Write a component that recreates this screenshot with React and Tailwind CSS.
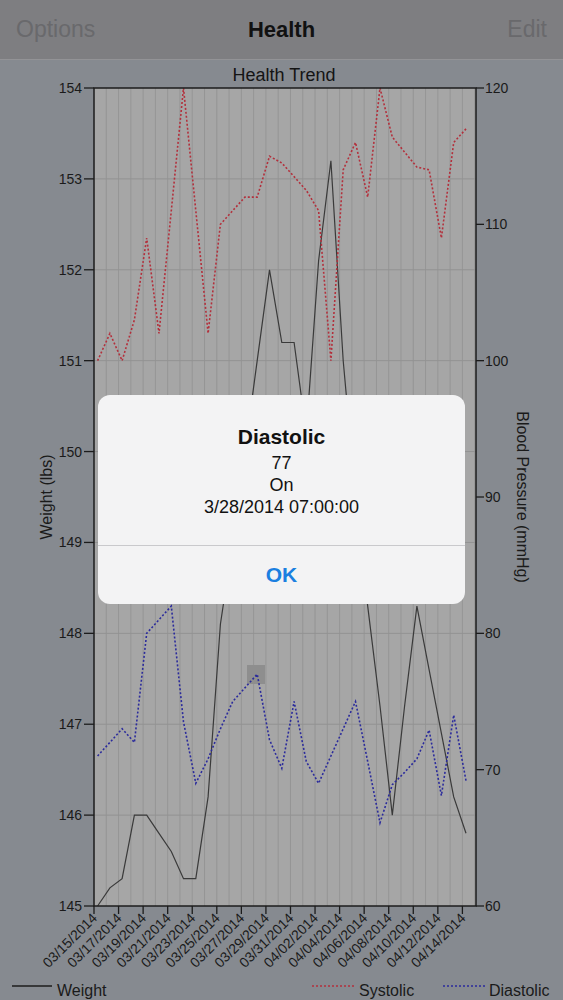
import React from "react";

const font = '"Liberation Sans", Arial, sans-serif';

const weight = [
  145.0, 145.2, 145.3, 146.0, 146.0, 145.8, 145.6, 145.3, 145.3, 146.2, 148.1,
  149.0, 150.0, 151.0, 152.0, 151.2, 151.2, 150.2, 152.1, 153.2, 151.0, 149.5,
  148.3, 147.2, 146.0, 147.2, 148.3, 147.6, 146.9, 146.2, 145.8,
];
const systolic = [
  100, 102, 100, 103, 109, 102, 111, 120, 111, 102, 110, 111, 112, 112, 115, 114.5,
  113.5, 112.5, 111, 100, 114, 116, 112, 120, 116.4, 115.3, 114.2, 114, 109, 116, 117,
];
const diastolic = [
  71, 72, 73, 72, 80, 81, 82, 73.5, 69, 70.8, 73, 75, 76, 77, 72.2, 70.1, 75, 70.6, 69,
  71, 73, 75, 70.6, 66.1, 68.9, 69.8, 70.8, 72.9, 68.1, 74, 69.2,
];
const dates = [
  "03/15/2014", "03/17/2014", "03/19/2014", "03/21/2014", "03/23/2014", "03/25/2014",
  "03/27/2014", "03/29/2014", "03/31/2014", "04/02/2014", "04/04/2014", "04/06/2014",
  "04/08/2014", "04/10/2014", "04/12/2014", "04/14/2014",
];

const L = 94;
const R = 476;
const T = 88;
const B = 906;
const xDay = (d) => L + 12.28 * d;
const yW = (w) => T + (154 - w) * ((B - T) / 9);
const yBP = (v) => T + (120 - v) * ((B - T) / 60);

const pts = (arr, fy) =>
  arr.map((v, i) => `${xDay(i + 7 / 24).toFixed(1)},${fy(v).toFixed(1)}`).join(" ");

function Chart() {
  return (
    <svg width="563" height="940" viewBox="0 60 563 940" className="block" fontFamily={font}>
      <text x="284" y="81" textAnchor="middle" fontSize="18" fill="#141414">
        Health Trend
      </text>

      {/* plot area */}
      <rect x={L} y={T} width={R - L} height={B - T} fill="#a6a6a6" />
      {Array.from({ length: 31 }, (_, i) => (
        <line key={i} x1={xDay(i + 1)} x2={xDay(i + 1)} y1={T} y2={B} stroke="#959595" strokeWidth="1" />
      ))}
      {[146, 147, 148, 149, 150, 151, 152, 153].map((w) => (
        <line key={w} x1={L} x2={R} y1={yW(w)} y2={yW(w)} stroke="#929292" strokeWidth="1" />
      ))}

      {/* selected point */}
      <rect x="247" y="665" width="18" height="19" fill="#8e8e8e" />

      <polyline points={pts(weight, yW)} fill="none" stroke="#3a3a3a" strokeWidth="1.2" />
      <polyline points={pts(systolic, yBP)} fill="none" stroke="#b3303c" strokeWidth="1.6" strokeDasharray="2 2" />
      <polyline points={pts(diastolic, yBP)} fill="none" stroke="#2b2b9c" strokeWidth="1.6" strokeDasharray="2 2" />

      {/* axes */}
      <rect x={L} y={T} width={R - L} height={B - T} fill="none" stroke="#1c1c1c" strokeWidth="1.5" />

      {[145, 146, 147, 148, 149, 150, 151, 152, 153, 154].map((w) => (
        <g key={w}>
          <line x1={L - 10} x2={L} y1={yW(w)} y2={yW(w)} stroke="#1c1c1c" strokeWidth="1.3" />
          <text x={L - 12} y={yW(w) + 5} textAnchor="end" fontSize="14" fill="#1a1a1a">
            {w}
          </text>
        </g>
      ))}
      {[60, 70, 80, 90, 100, 110, 120].map((v) => (
        <g key={v}>
          <line x1={R} x2={R + 8} y1={yBP(v)} y2={yBP(v)} stroke="#1c1c1c" strokeWidth="1.3" />
          <text x={R + 9} y={yBP(v) + 5} fontSize="14" fill="#1a1a1a">
            {v}
          </text>
        </g>
      ))}
      {dates.map((d, i) => {
        const x = xDay(i * 2);
        return (
          <g key={d}>
            <line x1={x} x2={x} y1={B} y2={B + 8} stroke="#1c1c1c" strokeWidth="1.3" />
            <text
              transform={`translate(${x + 4} ${B + 13}) rotate(-45)`}
              textAnchor="end"
              fontSize="14"
              fill="#1a1a1a"
            >
              {d}
            </text>
          </g>
        );
      })}

      <text transform="translate(52 497) rotate(-90)" textAnchor="middle" fontSize="16" fill="#1a1a1a">
        Weight (lbs)
      </text>
      <text transform="translate(517 497) rotate(90)" textAnchor="middle" fontSize="16" fill="#1a1a1a">
        Blood Pressure (mmHg)
      </text>

      {/* legend */}
      <line x1="12" x2="52" y1="986" y2="986" stroke="#1c1c1c" strokeWidth="1.3" />
      <text x="57" y="996" fontSize="16" fill="#1a1a1a">Weight</text>
      <line x1="312" x2="354" y1="986" y2="986" stroke="#b3303c" strokeWidth="1.3" strokeDasharray="2 2" />
      <text x="359" y="996" fontSize="16" fill="#1a1a1a">Systolic</text>
      <line x1="443" x2="485" y1="986" y2="986" stroke="#2b2b9c" strokeWidth="1.3" strokeDasharray="2 2" />
      <text x="489" y="996" fontSize="16" fill="#1a1a1a">Diastolic</text>
    </svg>
  );
}

export default function App() {
  return (
    <div
      className="relative w-[563px] h-[1000px] overflow-hidden bg-[#868a90]"
      style={{ fontFamily: font }}
    >
      <header className="h-[60px] grid grid-cols-[1fr_auto_1fr] items-center px-4 bg-[#7e7e81] border-b border-[#939396]">
        <span className="text-[23px] text-[#69696c]">Options</span>
        <span className="text-[22px] font-bold text-[#111]">Health</span>
        <span className="text-[23px] text-[#69696c] text-right">Edit</span>
      </header>

      <Chart />

      {/* alert */}
      <div className="absolute left-[98px] top-[395px] w-[367px] h-[209px] rounded-[12px] bg-[#f3f3f4] flex flex-col overflow-hidden">
        <div className="h-[150px] pt-[29px] flex flex-col items-center text-[#111]">
          <div className="text-[21px] leading-[26px] font-bold">Diastolic</div>
          <div className="mt-[2px] text-[18px] leading-[22px]">77</div>
          <div className="text-[18px] leading-[22px]">On</div>
          <div className="text-[18px] leading-[22px]">3/28/2014 07:00:00</div>
        </div>
        <div className="h-px bg-[#c9c9cc]" />
        <div className="flex-1 flex items-center justify-center">
          <span className="text-[21px] font-bold text-[#1b7fe0]">OK</span>
        </div>
      </div>
    </div>
  );
}
